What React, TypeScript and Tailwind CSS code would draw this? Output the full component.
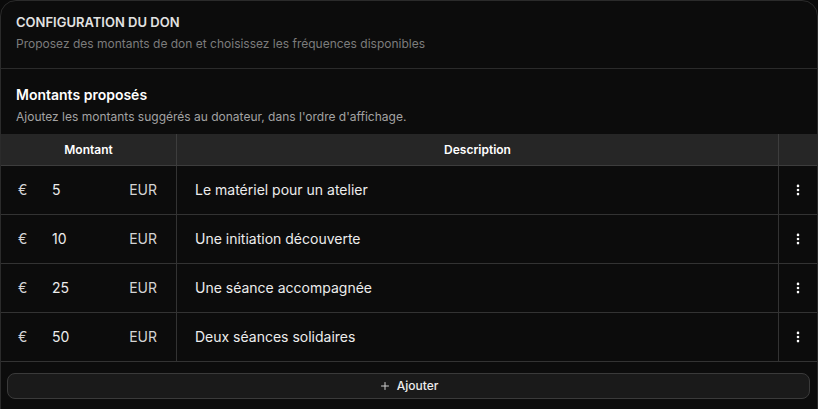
import React from "react";
import { EllipsisVertical, Plus } from "lucide-react";

const rows = [
  { amount: "5", label: "Le matériel pour un atelier" },
  { amount: "10", label: "Une initiation découverte" },
  { amount: "25", label: "Une séance accompagnée" },
  { amount: "50", label: "Deux séances solidaires" },
];

const App = () => {
  return (
    <div className="bg-[#0a0a0a] min-h-screen w-full font-['Inter',sans-serif] text-[#ededed]">
      <div className="w-full rounded-t-2xl border border-[#2b2b2b] bg-[#0c0c0c] pb-4">
        {/* Card header */}
        <div className="pl-[15px] pr-4 pt-[11px] pb-[14px] border-b border-[#2b2b2b]">
          <div className="text-[13px] leading-5 font-semibold uppercase text-[#e2e2e2]">
            Configuration du don
          </div>
          <div className="mt-[2px] text-xs leading-5 text-[#7c7c7c]">
            Proposez des montants de don et choisissez les fréquences disponibles
          </div>
        </div>

        {/* Amounts section */}
        <div className="pl-[15px] pr-4 pt-4 pb-[7px]">
          <div className="text-sm leading-5 font-semibold text-white">Montants proposés</div>
          <div className="mt-0.5 text-xs leading-5 text-[#a3a3a3]">
            Ajoutez les montants suggérés au donateur, dans l'ordre d'affichage.
          </div>
        </div>

        <div className="w-full">
          <div className="grid grid-cols-[176px_1fr_38px] h-8 bg-[#262626] border-b border-[#3d3d3d] text-xs font-semibold text-white">
            <div className="flex items-center justify-center border-r border-[#3d3d3d]">Montant</div>
            <div className="flex items-center justify-center border-r border-[#3d3d3d]">Description</div>
            <div></div>
          </div>
          {rows.map((r) => (
            <div
              key={r.amount}
              className="grid grid-cols-[176px_1fr_38px] h-[49px] border-b border-[#333333] text-sm"
            >
              <div className="flex items-center pl-[17px] pr-[19px] border-r border-[#333333]">
                <span className="w-[34px] text-[#d4d4d4]">€</span>
                <span className="flex-1 text-[#ededed]">{r.amount}</span>
                <span className="text-[#d4d4d4]">EUR</span>
              </div>
              <div className="flex items-center pl-[18px] border-r border-[#333333] text-[#ededed]">
                {r.label}
              </div>
              <div className="flex items-center justify-center">
                <EllipsisVertical size={14} strokeWidth={2.5} className="text-white" />
              </div>
            </div>
          ))}
        </div>

        <div className="pl-[6px] pr-[7px] pt-[11px]">
          <button className="w-full h-[26px] flex items-center justify-center gap-1.5 rounded-lg border border-[#3a3a3a] bg-[#1a1a1a] text-xs font-medium text-[#ededed]">
            <Plus size={12} strokeWidth={2} className="text-[#cfcfcf]" />
            Ajouter
          </button>
        </div>
      </div>
    </div>
  );
};

export default App;
